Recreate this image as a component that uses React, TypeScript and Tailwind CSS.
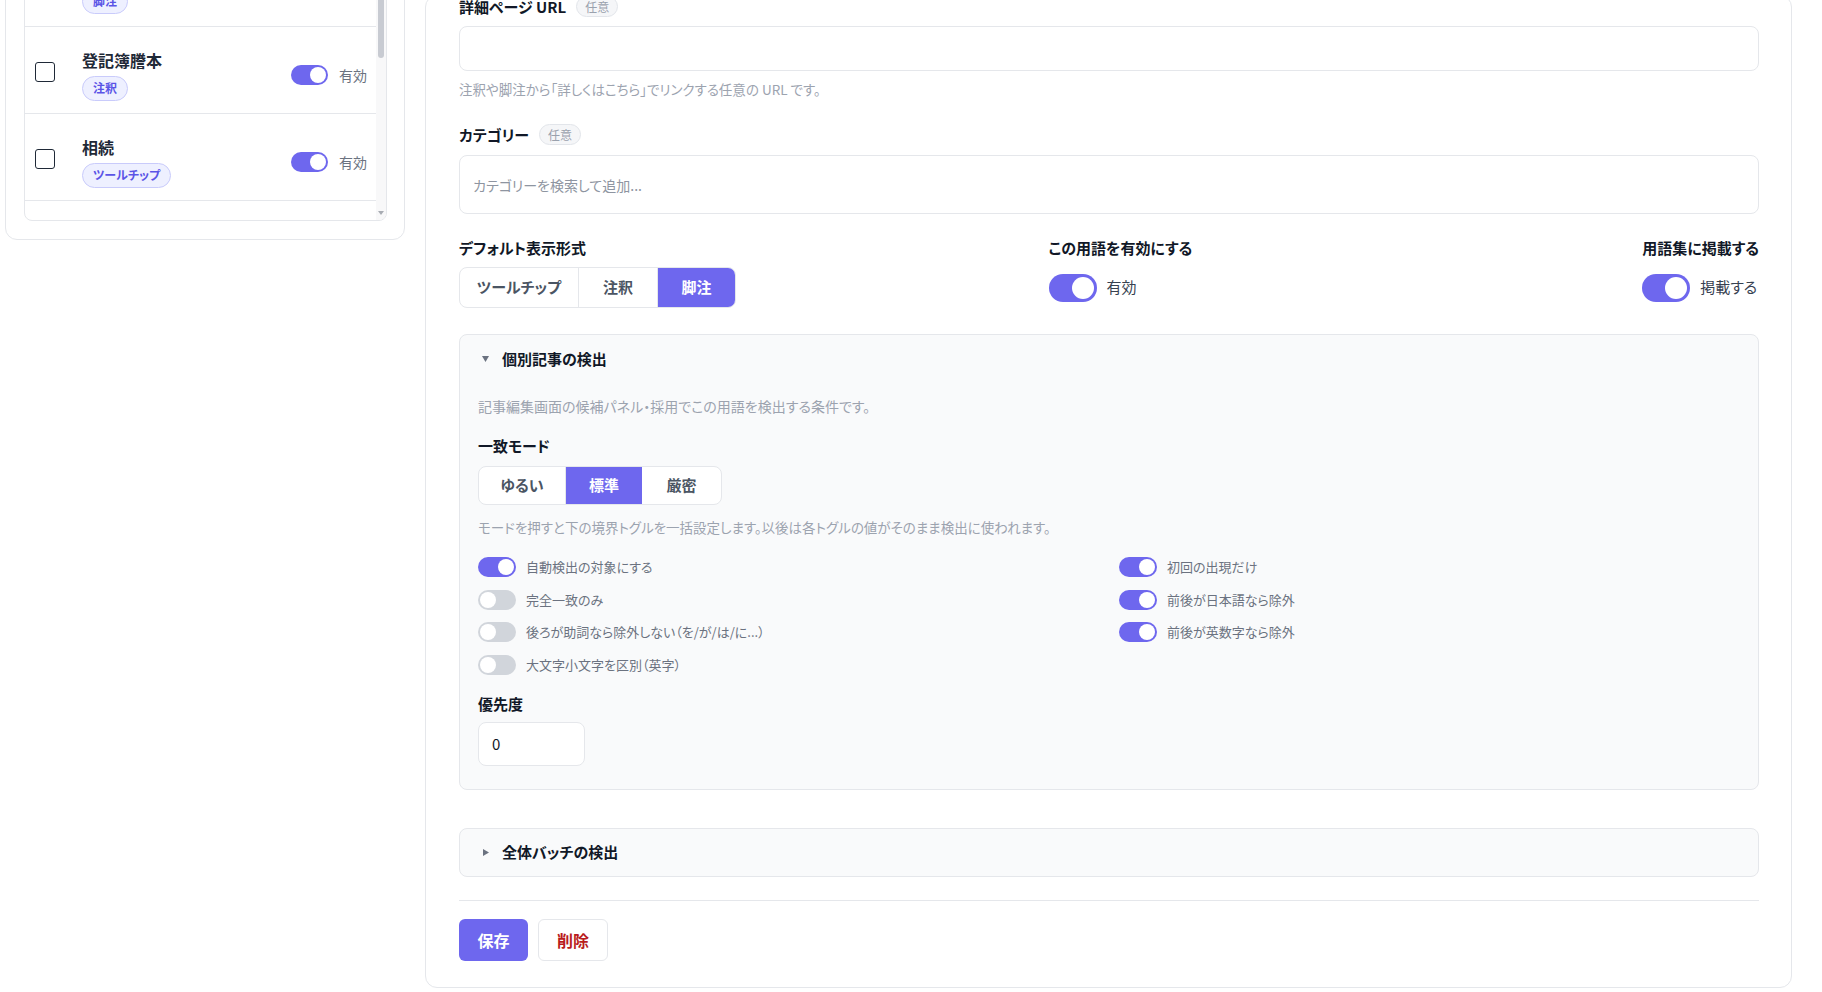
import React from 'react';

type ToggleProps = { on: boolean; large?: boolean; list?: boolean };

function Toggle({ on, large, list }: ToggleProps) {
  if (large) {
    return (
      <span
        className={
          on
            ? 'flex h-[28px] w-[48px] shrink-0 items-center justify-end rounded-full bg-[#6e67ee] p-[3px]'
            : 'flex h-[28px] w-[48px] shrink-0 items-center justify-start rounded-full bg-[#d1d5db] p-[3px]'
        }
      >
        <span className="h-[22px] w-[22px] rounded-full bg-white" />
      </span>
    );
  }
  const width = list ? 'w-[37px]' : 'w-[38px]';
  return (
    <span
      className={
        on
          ? `flex h-[20px] ${width} shrink-0 items-center justify-end rounded-full bg-[#6e67ee] p-[2px]`
          : `flex h-[20px] ${width} shrink-0 items-center justify-start rounded-full bg-[#d1d5db] p-[2px]`
      }
    >
      <span className="h-[16px] w-[16px] rounded-full bg-white" />
    </span>
  );
}

function TypeBadge({ label }: { label: string }) {
  return (
    <span className="inline-flex h-[25px] items-center rounded-full border border-[#c9cbfb] bg-[#eef0ff] px-[10px] text-[12px] font-semibold text-[#5b54e6]">
      {label}
    </span>
  );
}

function OptionalBadge() {
  return (
    <span className="inline-flex h-[21px] items-center rounded-full border border-[#e2e5ea] bg-[#f5f6f8] px-[8px] text-[12px] text-[#9aa1ad]">
      任意
    </span>
  );
}

function Label({ children }: { children: React.ReactNode }) {
  return <div className="text-[15px] font-bold leading-[20px] text-[#111827]">{children}</div>;
}

const terms = [
  { title: '遺言書', type: '脚注' },
  { title: '登記簿謄本', type: '注釈' },
  { title: '相続', type: 'ツールチップ' },
  { title: '遺産分割', type: '注釈' },
];

function TermRow({ title, type }: { title: string; type: string }) {
  return (
    <div className="flex h-[87px] shrink-0 items-start border-b border-[#e5e7eb] pl-[10px] pr-[9px]">
      <span className="mt-[35px] h-[20px] w-[20px] shrink-0 rounded-[3px] border-[1.5px] border-[#1f2937] bg-white" />
      <div className="ml-[27px] mt-[21px] flex flex-col items-start">
        <div className="text-[16px] font-semibold leading-6 text-[#1f2937]">{title}</div>
        <div className="mt-[2px]">
          <TypeBadge label={type} />
        </div>
      </div>
      <div className="flex-1" />
      <div className="mt-[38px] flex items-center gap-[11px]">
        <Toggle on list />
        <span className="text-[14px] leading-[20px] text-[#6b7280]">有効</span>
      </div>
    </div>
  );
}

function TermList() {
  return (
    <div className="-mt-[79px] w-[400px] shrink-0 rounded-xl border border-[#e5e7eb] bg-white pb-[18px] pl-[18px] pr-[17px] pt-[17px]">
      <div className="flex h-[282px] w-[363px] overflow-hidden rounded-lg border border-[#e5e7eb] bg-white">
        <div className="flex min-w-0 flex-1 flex-col overflow-hidden">
          {terms.map((t) => (
            <TermRow key={t.title} title={t.title} type={t.type} />
          ))}
        </div>
        {/* fake scrollbar */}
        <div className="flex w-[10px] shrink-0 flex-col items-center bg-[#f8f8f9]">
          <div className="h-[118px] w-[6px] rounded-full bg-[#c8cbd2]" />
          <div className="flex-1" />
          <svg width="6" height="4" viewBox="0 0 6 4" className="mb-[5px]">
            <polygon points="0,0 6,0 3,4" fill="#a8acb3" />
          </svg>
        </div>
      </div>
    </div>
  );
}

type Segment = { label: string; width: string };

function Segmented({ items, active, height }: { items: Segment[]; active: number; height: string }) {
  return (
    <div className={`flex ${height} w-fit overflow-hidden rounded-lg border border-[#e5e7eb] bg-white`}>
      {items.map((item, i) => (
        <div
          key={item.label}
          className={
            i === active
              ? `flex ${item.width} items-center justify-center bg-[#6e67ee] text-[15px] font-bold text-white`
              : i < items.length - 1
                ? `flex ${item.width} items-center justify-center border-r border-[#e5e7eb] text-[15px] font-semibold text-[#4b5563]`
                : `flex ${item.width} items-center justify-center text-[15px] font-semibold text-[#4b5563]`
          }
        >
          {item.label}
        </div>
      ))}
    </div>
  );
}

function ToggleLine({ on, label }: { on: boolean; label: string }) {
  return (
    <div className="flex h-[20px] items-center gap-[10px]">
      <Toggle on={on} />
      <span className="text-[13px] leading-[20px] text-[#6b7280]">{label}</span>
    </div>
  );
}

function DownCaret() {
  return (
    <svg width="7" height="6" viewBox="0 0 7 6">
      <polygon points="0,0 7,0 3.5,6" fill="#6b7280" />
    </svg>
  );
}

function RightCaret() {
  return (
    <svg width="6" height="7" viewBox="0 0 6 7">
      <polygon points="0,0 6,3.5 0,7" fill="#6b7280" />
    </svg>
  );
}

function TermForm() {
  return (
    <div className="-mt-[5px] w-[1367px] shrink-0 rounded-xl border border-[#e5e7eb] bg-white pb-[26px] pl-[33px] pr-[32px]">
      {/* detail url */}
      <div className="flex items-center gap-[10px]">
        <Label>詳細ページ URL</Label>
        <OptionalBadge />
      </div>
      <input
        readOnly
        className="mt-[9px] block h-[45px] w-full rounded-lg border border-[#e5e7eb] bg-white px-[13px] text-[14px] outline-none"
      />
      <div className="mt-[10px] text-[13.5px] leading-[16px] text-[#9ca3af]">
        注釈や脚注から「詳しくはこちら」でリンクする任意の URL です。
      </div>

      {/* category */}
      <div className="mt-[27px] flex items-center gap-[10px]">
        <Label>カテゴリー</Label>
        <OptionalBadge />
      </div>
      <input
        readOnly
        placeholder="カテゴリーを検索して追加..."
        className="mt-[10px] block h-[59px] w-full rounded-lg border border-[#e5e7eb] bg-white px-[13px] text-[14px] outline-none placeholder:text-[#8e95a1]"
      />

      {/* display / enable / glossary */}
      <div className="mt-[24px] grid grid-cols-[1fr_1fr_auto] gap-x-[20px]">
        <div>
          <Label>デフォルト表示形式</Label>
          <div className="mt-[9px]">
            <Segmented
              items={[
                { label: 'ツールチップ', width: 'w-[119px]' },
                { label: '注釈', width: 'w-[79px]' },
                { label: '脚注', width: 'w-[77px]' },
              ]}
              active={2}
              height="h-[41px]"
            />
          </div>
        </div>
        <div className="-ml-[2px]">
          <Label>この用語を有効にする</Label>
          <div className="mt-[9px] flex h-[41px] items-center gap-[10px]">
            <Toggle on large />
            <span className="text-[15px] text-[#374151]">有効</span>
          </div>
        </div>
        <div>
          <Label>用語集に掲載する</Label>
          <div className="mt-[9px] flex h-[41px] items-center gap-[10px]">
            <Toggle on large />
            <span className="text-[15px] text-[#374151]">掲載する</span>
          </div>
        </div>
      </div>

      {/* per-article detection */}
      <div className="mt-[26px] rounded-lg border border-[#e5e7eb] bg-[#f9fafb] pb-[23px] pl-[18px] pr-[18px] pt-[14px]">
        <div className="flex h-[20px] items-center">
          <span className="flex w-[24px] pl-[4px]">
            <DownCaret />
          </span>
          <span className="text-[15px] font-bold leading-[20px] text-[#111827]">個別記事の検出</span>
        </div>
        <div className="mt-[27px] text-[14px] leading-[20px] text-[#9ca3af]">
          記事編集画面の候補パネル・採用でこの用語を検出する条件です。
        </div>
        <div className="mt-[20px]">
          <Label>一致モード</Label>
        </div>
        <div className="mt-[10px]">
          <Segmented
            items={[
              { label: 'ゆるい', width: 'w-[87px]' },
              { label: '標準', width: 'w-[76px]' },
              { label: '厳密', width: 'w-[79px]' },
            ]}
            active={1}
            height="h-[39px]"
          />
        </div>
        <div className="mt-[12px] text-[13.5px] leading-[20px] text-[#9ca3af]">
          モードを押すと下の境界トグルを一括設定します。以後は各トグルの値がそのまま検出に使われます。
        </div>
        <div className="mt-[20px] grid grid-cols-2 gap-x-5 gap-y-[12.5px]">
          <ToggleLine on label="自動検出の対象にする" />
          <ToggleLine on label="初回の出現だけ" />
          <ToggleLine on={false} label="完全一致のみ" />
          <ToggleLine on label="前後が日本語なら除外" />
          <ToggleLine on={false} label="後ろが助詞なら除外しない（を/が/は/に...）" />
          <ToggleLine on label="前後が英数字なら除外" />
          <ToggleLine on={false} label="大文字小文字を区別（英字）" />
        </div>
        <div className="mt-[19px]">
          <Label>優先度</Label>
        </div>
        <input
          readOnly
          value="0"
          className="mt-[8px] block h-[44px] w-[107px] rounded-lg border border-[#e5e7eb] bg-white px-[13px] text-[15px] text-[#111827] outline-none"
        />
      </div>

      {/* batch detection (collapsed) */}
      <div className="mt-[38px] flex h-[49px] items-center rounded-lg border border-[#e5e7eb] bg-[#f9fafb] pl-[23px]">
        <span className="flex w-[19px]">
          <RightCaret />
        </span>
        <span className="text-[15px] font-bold leading-[20px] text-[#111827]">全体バッチの検出</span>
      </div>

      <div className="mt-[23px] border-t border-[#e5e7eb]" />

      <div className="mt-[18px] flex gap-[10px]">
        <button className="flex h-[42px] w-[69px] items-center justify-center rounded-md bg-[#6e67ee] text-[16px] font-bold text-white">
          保存
        </button>
        <button className="flex h-[42px] w-[70px] items-center justify-center rounded-md border border-[#e5e7eb] bg-white text-[16px] font-semibold text-[#b91c1c]">
          削除
        </button>
      </div>
    </div>
  );
}

export default function App() {
  return (
    <div className="h-[992px] w-full overflow-hidden bg-white font-['Noto_Sans_CJK_JP','Noto_Sans',sans-serif] [font-feature-settings:'palt']">
      <div className="flex items-start gap-[20px] pl-[5px]">
        <TermList />
        <TermForm />
      </div>
    </div>
  );
}
